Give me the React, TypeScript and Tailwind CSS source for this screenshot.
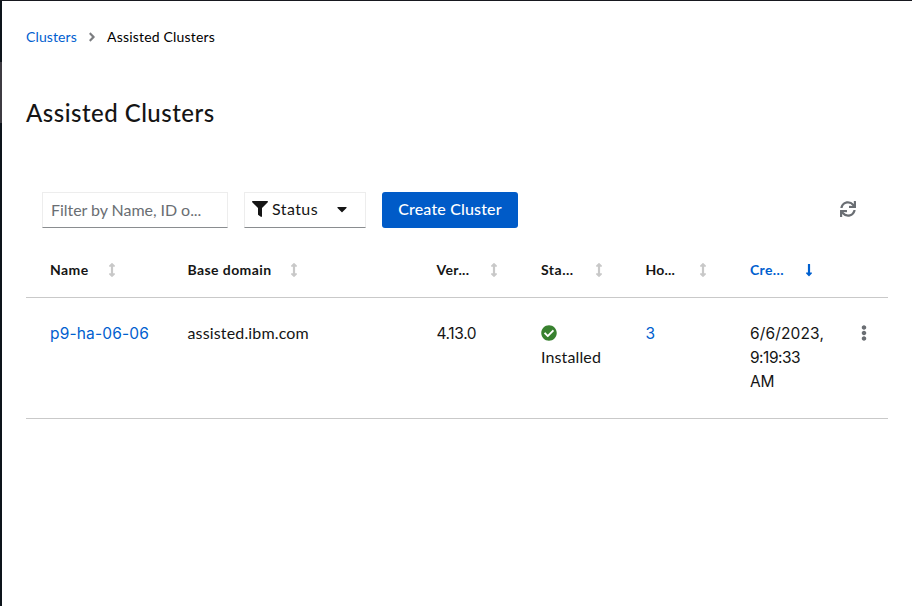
import type { ReactNode } from 'react'
import {
  FaAngleRight,
  FaArrowsAltV,
  FaCaretDown,
  FaCheckCircle,
  FaEllipsisV,
  FaFilter,
  FaLongArrowAltDown,
  FaSync,
} from 'react-icons/fa'

const columns = 'grid grid-cols-[137.5px_249px_104.5px_104.5px_104.5px_105.5px_1fr] pl-6'

function Header({ label, className, sorted = false, gap }: { label: string; className: string; sorted?: boolean; gap: string }) {
  return (
    <button className={`flex items-center text-left text-sm font-bold ${sorted ? 'text-[#0060cf]' : 'text-[#151515]'}`}>
      <span className={`${gap} shrink-0 whitespace-nowrap ${className}`}>{label}</span>
      {sorted ? <FaLongArrowAltDown size={14} /> : <FaArrowsAltV size={14} className="text-[#c8c8c8]" />}
    </button>
  )
}

function Cell({ children, className = '' }: { children: ReactNode; className?: string }) {
  return <div className={`whitespace-nowrap text-base leading-6 ${className}`}>{children}</div>
}

export default function App() {
  return (
    <div className="flex h-[606px] w-[912px] flex-col overflow-hidden bg-white font-[Lato,sans-serif] text-[#151515]">
      <div className="h-px shrink-0 bg-[#17181f]" />
      <div className="flex flex-1">
        <div className="flex w-0.5 flex-col bg-[#0d141b]">
          <div className="mt-[61px] h-[61px] bg-[#3d3b41]" />
        </div>
        <main className="flex-1 pl-6 pr-6">
          <nav className="mt-[26px] flex h-5 items-center text-sm">
            <a className="w-[59px] tracking-[0.12px] text-[#0060cf]">Clusters</a>
            <FaAngleRight size={14} className="mr-2 text-[#7b7d80]" />
            <span className="tracking-[0.19px] text-black">Assisted Clusters</span>
          </nav>
          <h1 className="mt-[50px] h-8 text-2xl font-medium leading-8 tracking-[0.48px]">Assisted Clusters</h1>
          <div className="mt-[63px] flex h-9 items-center pl-4 pr-8">
            <input
              className="h-9 w-[186px] border border-[#ededed] border-b-[#8a8d90] px-2 pb-0.5 text-base tracking-[-0.05px] placeholder:text-[#6a6e73] placeholder:opacity-100"
              placeholder="Filter by Name, ID o..."
            />
            <button className="ml-4 flex h-9 w-[122px] items-center border border-[#ededed] border-b-[#8a8d90] pb-0.5 pl-[7px] text-base">
              <FaFilter size={16} />
              <span className="ml-1 w-[62px] text-left tracking-[0.42px]">Status</span>
              <FaCaretDown size={16} />
            </button>
            <button className="ml-4 h-9 w-[136px] rounded-[3px] bg-[#005bc8] pb-0.5 text-base font-medium tracking-[0.16px] text-white">
              Create Cluster
            </button>
            <FaSync size={16} className="mb-0.5 ml-auto text-[#6a6e73]" />
          </div>
          <div>
            <div className={`${columns} h-[70px] border-b border-[#c9c9c9] pb-[13px] pt-[27px]`}>
              <Header label="Name" gap="w-[55px]" className="tracking-[0.4px]" />
              <Header label="Base domain" gap="w-[99.5px]" className="tracking-[0.41px]" />
              <Header label="Ver..." gap="w-[50.5px]" className="tracking-[0.38px]" />
              <Header label="Sta..." gap="w-[51px]" className="tracking-[0.5px]" />
              <Header label="Ho..." gap="w-[50.5px]" className="tracking-[0.18px]" />
              <Header label="Cre..." gap="w-[51.5px]" className="tracking-[0.38px]" sorted />
            </div>
            <div className={`${columns} h-[121px] border-b border-[#c9c9c9] pt-[23px]`}>
              <Cell className="text-[#0060cf]">
                <a className="font-[Inter,sans-serif] text-[15.5px] tracking-[0.17px]">p9-ha-06-06</a>
              </Cell>
              <Cell className="tracking-[0.15px]">assisted.ibm.com</Cell>
              <Cell>
                <span className="font-[Inter,sans-serif] text-[15.5px] tracking-[-0.38px]">4.13.0</span>
              </Cell>
              <Cell className="tracking-[0.13px]">
                <div className="flex h-6 items-center">
                  <FaCheckCircle size={16} className="text-[#38812f]" />
                </div>
                <div>Installed</div>
              </Cell>
              <Cell className="text-[#0060cf]">
                <a className="font-[Inter,sans-serif] text-[15.5px]">3</a>
              </Cell>
              <Cell className="pt-px font-[Inter,sans-serif]">
                <div className="text-[15.5px] tracking-[0.14px]">6/6/2023,</div>
                <div className="text-[15.5px] tracking-[-0.5px]">9:19:33</div>
                <div className="text-[15.5px] tracking-[-0.2px]">AM</div>
              </Cell>
              <div className="flex h-6 items-center">
                <FaEllipsisV size={16} className="text-[#6a6e73]" />
              </div>
            </div>
          </div>
        </main>
      </div>
    </div>
  )
}
